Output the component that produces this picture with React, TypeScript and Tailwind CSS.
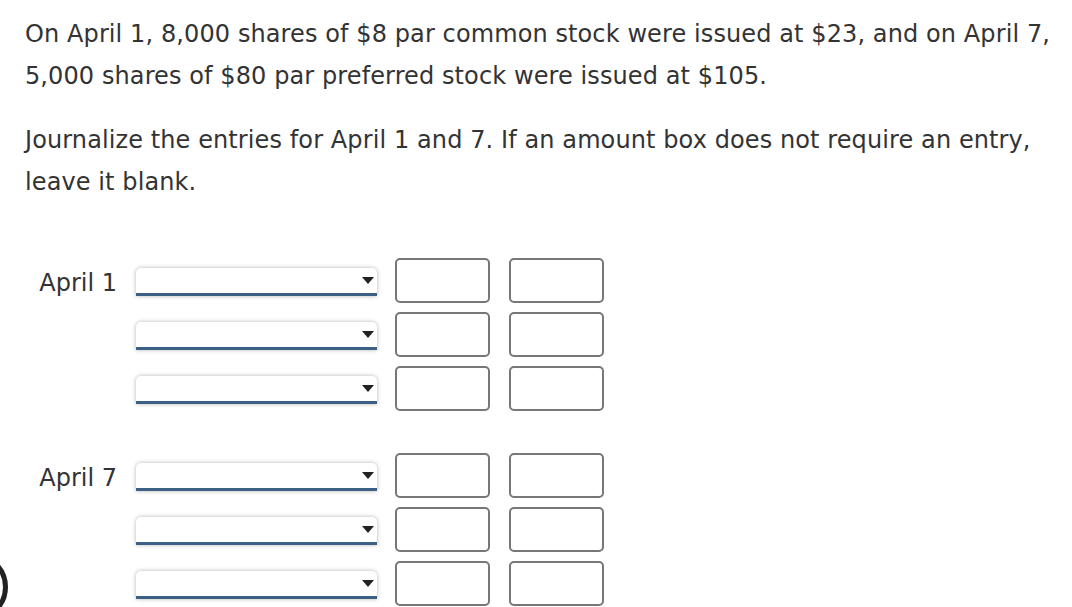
import React from 'react'

const FONT = { fontFamily: '"DejaVu Sans", Verdana, sans-serif' }

function Select() {
  return (
    <div className="relative w-[241px] h-[28px] bg-white rounded-t-[5px] shadow-[0_0_4px_rgba(0,0,0,0.3)] border-b-[3px] border-[#3b5f85]">
      <span className="absolute right-[3px] top-[9px] w-0 h-0 border-l-[6px] border-r-[6px] border-t-[7px] border-l-transparent border-r-transparent border-t-[#222]" />
    </div>
  )
}

function Amount() {
  return <div className="w-[95px] h-[45px] rounded-[5px] border-2 border-[#777] bg-white" />
}

function EntryGroup({ label }: { label: string }) {
  return (
    <div className="flex flex-col gap-[9px]">
      {[0, 1, 2].map(i => (
        <div key={i} className="flex items-center h-[45px]">
          <div className="w-[136px] shrink-0 pr-[19px] text-right text-[24px] text-[#333] pt-[4px]">{i === 0 ? label : ''}</div>
          <div className="pt-[3px]"><Select /></div>
          <div className="ml-[18px] flex gap-[19px]">
            <Amount />
            <Amount />
          </div>
        </div>
      ))}
    </div>
  )
}

export default function App() {
  return (
    <div className="relative w-[1072px] h-[607px] overflow-hidden bg-white" style={FONT}>
      <div className="pl-[25px] pr-[15px] pt-[13px] text-[24px] leading-[42px] tracking-[0.1px] text-[#333]">
        <p>On April 1, 8,000 shares of $8 par common stock were issued at $23, and on April 7, 5,000 shares of $80 par preferred stock were issued at $105.</p>
        <p className="mt-[22px]">Journalize the entries for April 1 and 7. If an amount box does not require an entry, leave it blank.</p>
      </div>
      <div className="mt-[55px] flex flex-col gap-[42px]">
        <EntryGroup label="April 1" />
        <EntryGroup label="April 7" />
      </div>
      <div className="absolute left-[-62px] top-[552px] w-[70px] h-[70px] rounded-full border-[5px] border-[#222]" />
    </div>
  )
}
